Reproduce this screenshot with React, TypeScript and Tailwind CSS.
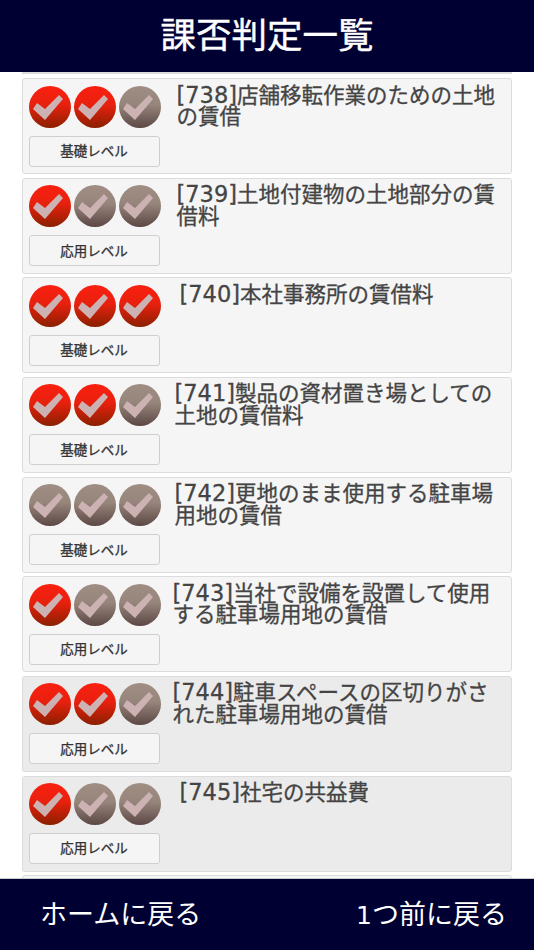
const F = "[font-family:'DejaVu_Sans','Noto_Sans_CJK_JP',sans-serif]";

type Item = { no: string; title: string; level: string; checks: boolean[]; ml: string; dark?: boolean };

const items: Item[] = [
  { no: "[738]", title: "店舗移転作業のための土地の賃借", level: "基礎レベル", checks: [true, true, false], ml: "ml-[11px]" },
  { no: "[739]", title: "土地付建物の土地部分の賃借料", level: "応用レベル", checks: [true, false, false], ml: "ml-[11px]" },
  { no: "[740]", title: "本社事務所の賃借料", level: "基礎レベル", checks: [true, true, true], ml: "ml-[14px]" },
  { no: "[741]", title: "製品の資材置き場としての土地の賃借料", level: "基礎レベル", checks: [true, true, false], ml: "ml-[9px]" },
  { no: "[742]", title: "更地のまま使用する駐車場用地の賃借", level: "基礎レベル", checks: [false, false, false], ml: "ml-[9px]" },
  { no: "[743]", title: "当社で設備を設置して使用する駐車場用地の賃借", level: "応用レベル", checks: [true, false, false], ml: "ml-[7px]" },
  { no: "[744]", title: "駐車スペースの区切りがされた駐車場用地の賃借", level: "応用レベル", checks: [true, true, false], ml: "ml-[7px]", dark: true },
  { no: "[745]", title: "社宅の共益費", level: "応用レベル", checks: [true, false, false], ml: "ml-[14px]", dark: true },
];

function Check({ on, id }: { on: boolean; id: string }) {
  return (
    <svg width="42" height="42" viewBox="0 0 42 42" className="block shrink-0">
      <defs>
        <linearGradient id={id} x1="0" y1="0" x2="0" y2="1">
          <stop offset="0" stopColor={on ? "#fa2010" : "#a08e84"} />
          <stop offset="0.45" stopColor={on ? "#e8200e" : "#96857b"} />
          <stop offset="1" stopColor={on ? "#8a2000" : "#5c4744"} />
        </linearGradient>
      </defs>
      <circle cx="21" cy="21" r="21" fill={`url(#${id})`} />
      <path d="M4 23 L8 17 L16 23 L30 9 L34 13 L16 34 Z" fill="#ccb2b2" />
    </svg>
  );
}

function Card({ item, idx }: { item: Item; idx: number }) {
  return (
    <div
      className={`h-[96px] shrink-0 mx-[22px] rounded-[3px] border-[1.5px] border-[#dcdcdc] flex ${
        item.dark ? "bg-[#ebebeb]" : "bg-[#f5f5f5]"
      }`}
    >
      <div className="w-[137px] ml-[5.5px] mt-[6.5px] shrink-0 flex flex-col">
        <div className="flex gap-[3px]">
          {item.checks.map((c, i) => (
            <Check key={i} on={c} id={`g${idx}-${i}`} />
          ))}
        </div>
        <div className="mt-[8px] w-[131px] h-[31px] rounded-[3px] bg-[#f5f5f5] border border-[#cfcfcf] flex items-center justify-center text-[13.5px] text-[#333] [-webkit-text-stroke:0.3px_#333]">
          {item.level}
        </div>
      </div>
      <div
        className={`${item.ml} mt-[4.5px] w-[325px] text-[21.5px] leading-[21px] text-[#444] [-webkit-text-stroke:0.3px_#444] break-all`}
      >
        <span className="text-[22.5px] leading-none">{item.no}</span>
        {item.title}
      </div>
    </div>
  );
}

export default function App() {
  return (
    <div className={`w-[534px] h-[950px] bg-white flex flex-col overflow-hidden ${F}`}>
      <header className="h-[72px] shrink-0 bg-[#000032] flex items-center justify-center text-white text-[35.5px] [-webkit-text-stroke:0.4px_#fff] pb-[1px]">
        課否判定一覧
      </header>
      <main className="flex-1 min-h-0 overflow-hidden flex flex-col">
        <div className="h-[2px] shrink-0 mx-[22px] bg-[#dcdcdc]" />
        <div className="mt-[4px] flex flex-col gap-[3.67px]">
          {items.map((item, i) => (
            <Card key={i} item={item} idx={i} />
          ))}
          <div className="h-[95px] shrink-0 mx-[22px] rounded-[3px] border-[1.5px] border-[#dcdcdc] bg-[#f5f5f5]" />
        </div>
      </main>
      <footer className="h-[72px] shrink-0 bg-[#000032] border-t border-[#cccccc] flex items-center justify-between pl-[40px] pr-[27px] pt-[2px] text-white text-[27px]">
        <span>ホームに戻る</span>
        <span>
          <span className="text-[25px]">1</span>つ前に戻る
        </span>
      </footer>
    </div>
  );
}
